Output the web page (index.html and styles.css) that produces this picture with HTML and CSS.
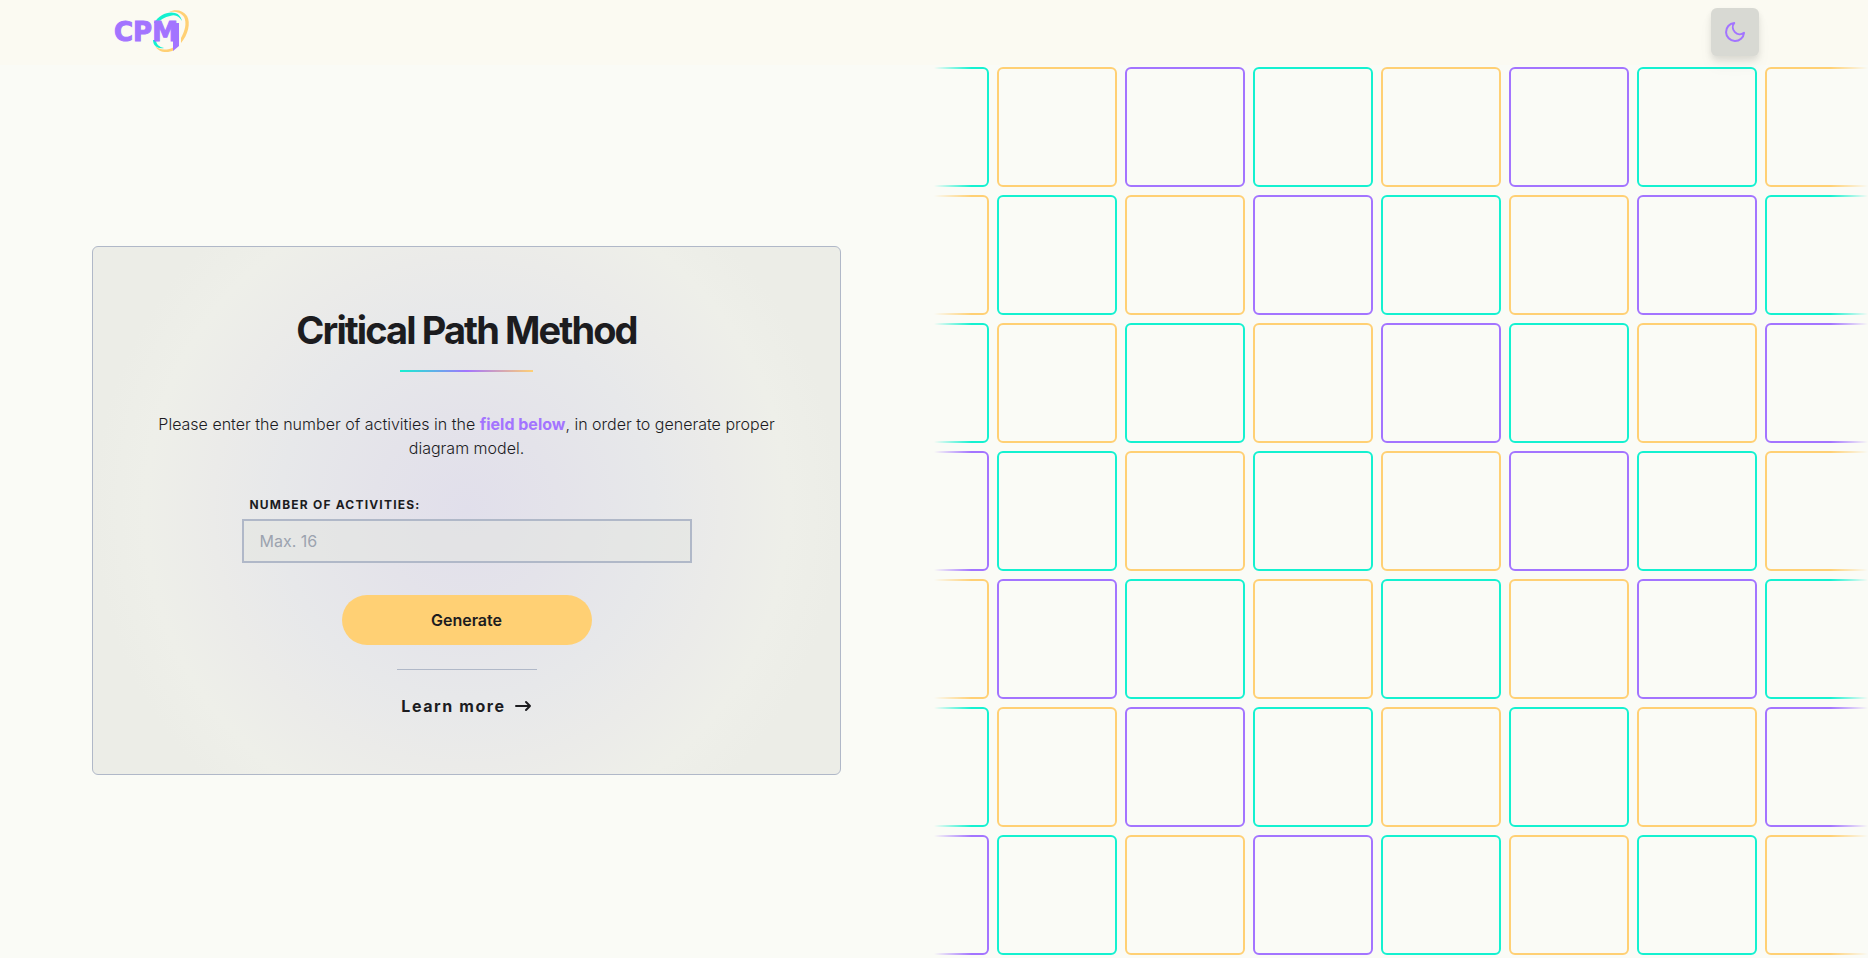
FILE: index.html
```html
<!DOCTYPE html>
<html lang="en">
<head>
<meta charset="utf-8">
<meta name="viewport" content="width=device-width, initial-scale=1">
<title>Critical Path Method</title>
<link rel="stylesheet" href="styles.css">
</head>
<body>
<header class="header">
  <a class="logo" href="#" aria-label="CPM home">
    <svg width="78" height="46" viewBox="0 0 78 46">
      <path d="M39 14C44 6 53 2 60 4C64 5 66 8 67 12C64 7 60 5 55 7C50 8 45 11 42 14Z" class="teal-fill"/>
      <path d="M54 3C60 0 68 1 72 7C76 14 73 26 66 34V29C70 22 72 14 69 8C66 3 60 2 54 3Z" class="yellow-fill"/>
      <path d="M38 31H41C41 35 44 38 49 39C43 40 38 37 38 31Z" class="teal-fill"/>
      <path d="M40 37C44 41 52 42 59 38V41C52 45 43 43 40 37Z" class="yellow-fill"/>
      <text x="-1" y="32" class="logo-text">CPM</text>
      <path d="M58 14H64V37L58 42Z" class="purple-fill"/>
    </svg>
  </a>
  <button class="theme" type="button" aria-label="Dark mode">
    <svg width="24" height="24" viewBox="0 0 24 24" fill="none" stroke="currentColor" stroke-width="2" stroke-linejoin="round"><path d="M21 12.79A9 9 0 1 1 11.21 3 7 7 0 0 0 21 12.79z"/></svg>
  </button>
</header>
<main class="main">
  <section class="intro">
    <form class="card">
      <h1 class="title">Critical Path Method</h1>
      <div class="accent"></div>
      <p class="text">Please enter the number of activities in the <strong class="mark">field below</strong>, in order to generate proper diagram model.</p>
      <div class="field">
        <label class="label" for="count">Number of activities:</label>
        <input class="input" id="count" type="text" inputmode="numeric" placeholder="Max. 16">
      </div>
      <button class="generate" type="button">Generate</button>
      <hr class="rule">
      <a class="more" href="#">Learn more
        <svg width="18" height="12" viewBox="0 0 18 12" fill="none" stroke="currentColor" stroke-width="2" stroke-linecap="round" stroke-linejoin="round"><path d="M2 6H16M12 2L16 6L12 10"/></svg>
      </a>
    </form>
  </section>
  <div class="tiles" aria-hidden="true">
    <i class="t"></i><i class="y"></i><i class="p"></i><i class="t"></i><i class="y"></i><i class="p"></i><i class="t"></i><i class="y"></i>
    <i class="y"></i><i class="t"></i><i class="y"></i><i class="p"></i><i class="t"></i><i class="y"></i><i class="p"></i><i class="t"></i>
    <i class="t"></i><i class="y"></i><i class="t"></i><i class="y"></i><i class="p"></i><i class="t"></i><i class="y"></i><i class="p"></i>
    <i class="p"></i><i class="t"></i><i class="y"></i><i class="t"></i><i class="y"></i><i class="p"></i><i class="t"></i><i class="y"></i>
    <i class="y"></i><i class="p"></i><i class="t"></i><i class="y"></i><i class="t"></i><i class="y"></i><i class="p"></i><i class="t"></i>
    <i class="t"></i><i class="y"></i><i class="p"></i><i class="t"></i><i class="y"></i><i class="t"></i><i class="y"></i><i class="p"></i>
    <i class="p"></i><i class="t"></i><i class="y"></i><i class="p"></i><i class="t"></i><i class="y"></i><i class="t"></i><i class="y"></i>
  </div>
</main>
</body>
</html>
```
FILE: styles.css
```css
:root {
  --teal: #14f1d0;
  --yellow: #ffd074;
  --purple: #a374ff;
  --line: #b0b8c8;
  --ink: #1c1c1f;
}
* { box-sizing: border-box; }
body {
  margin: 0;
  min-height: 100vh;
  display: flex;
  flex-direction: column;
  background: #fafbf6;
  color: var(--ink);
  font: 16px/24px Inter, sans-serif;
}
.header {
  display: flex;
  align-items: center;
  justify-content: space-between;
  padding: 8px 109px 9px 115px;
  background: #fbfaf2;
}
.logo { display: flex; }
.logo svg { overflow: visible; }
.logo-text {
  font: bold 26px "DejaVu Sans", sans-serif;
  fill: var(--purple);
  stroke: var(--purple);
  stroke-width: 1px;
}
.teal-fill { fill: var(--teal); }
.yellow-fill { fill: var(--yellow); }
.purple-fill { fill: var(--purple); }
.theme {
  display: grid;
  place-items: center;
  width: 48px;
  height: 48px;
  padding: 0;
  border: 0;
  border-radius: 6px;
  background: #d8d9d3;
  color: var(--purple);
  box-shadow: 0 4px 6px rgba(0, 0, 0, .1), 0 10px 15px rgba(0, 0, 0, .04);
}
.main {
  flex: 1;
  display: grid;
  grid-template-columns: repeat(2, minmax(0, 1fr));
}
.intro {
  display: flex;
  align-items: center;
  justify-content: center;
  padding: 24px 25px 27px 24px;
}
.card {
  display: flex;
  flex-direction: column;
  align-items: center;
  width: 100%;
  max-width: 749px;
  padding: 63px 56px 56px;
  border: 1px solid var(--line);
  border-radius: 6px;
  background: radial-gradient(circle farthest-side at center, #e1dfeb 0%, #e4e3ea 25%, #e7e8ea 50%, #ebebe9 68%, #eeefe9 86%, #ecede7 100%);
}
.title {
  margin: 0;
  font-size: 38px;
  line-height: 40px;
  font-weight: 700;
  letter-spacing: -0.05em;
}
.accent {
  width: 133px;
  height: 2px;
  margin: 20px 0 40px;
  background: linear-gradient(90deg, var(--teal), var(--purple), var(--yellow));
}
.text {
  margin: 0 0 37px;
  font-weight: 300;
  text-align: center;
}
.mark { color: var(--purple); font-weight: 700; }
.field { display: flex; flex-direction: column; width: 100%; max-width: 450px; }
.label {
  padding: 0 8px;
  font-size: 12px;
  line-height: 16px;
  font-weight: 700;
  letter-spacing: 0.1em;
  text-transform: uppercase;
  margin-bottom: 6px;
}
.input {
  width: 100%;
  height: 44px;
  padding: 0 16px;
  border: 2px solid var(--line);
  border-radius: 0;
  background: rgba(228, 229, 223, .5);
  color: var(--ink);
  font: inherit;
}
.input::placeholder { color: #9ca3af; opacity: 1; }
.generate {
  width: 250px;
  height: 50px;
  margin: 32px 0 24px;
  border: 0;
  border-radius: 25px;
  background: var(--yellow);
  color: var(--ink);
  font: 600 16px/24px Inter, sans-serif;
}
.rule { width: 140px; height: 1px; margin: 0 0 24px; border: 0; background: var(--line); }
.more {
  display: flex;
  align-items: center;
  gap: 8px;
  color: inherit;
  font-weight: 700;
  letter-spacing: 0.1em;
  text-decoration: none;
}
.tiles {
  display: grid;
  grid-template-columns: repeat(8, 120px);
  grid-auto-rows: 120px;
  gap: 8px;
  place-content: start center;
  padding: 2px 48px 0 0;
  overflow: hidden;
  -webkit-mask-image: linear-gradient(90deg, transparent, #000 4%, #000 96%, transparent);
  mask-image: linear-gradient(90deg, transparent, #000 4%, #000 96%, transparent);
}
.tiles i { border: 2px solid; border-radius: 6px; }
.t { color: var(--teal); }
.y { color: var(--yellow); }
.p { color: var(--purple); }
```
